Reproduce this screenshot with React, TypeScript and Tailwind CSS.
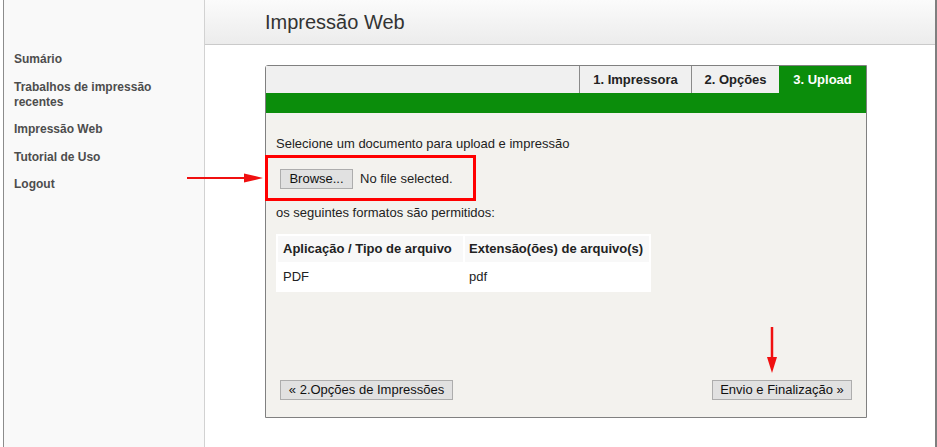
import React from "react";

export default function App() {
  return (
    <div className="relative flex h-[447px] w-[937px] overflow-hidden bg-white font-['Liberation_Sans',Arial,sans-serif] text-[#222]">
      {/* left edge */}
      <div className="w-[3px] shrink-0 bg-white" />
      <div className="w-px shrink-0 bg-[#8c8c8c]" />
      {/* sidebar */}
      <aside className="flex w-[201px] shrink-0 flex-col gap-[12.5px] border-r border-[#d2d2d2] bg-[#f9f9f9] pl-[10px] pr-[14px] pt-[52px] text-[12px] font-bold leading-[15px] text-[#4d4d4d]">
        <div>Sumário</div>
        <div>
          Trabalhos de impressão
          <br />
          recentes
        </div>
        <div>Impressão Web</div>
        <div>Tutorial de Uso</div>
        <div>Logout</div>
      </aside>
      {/* main */}
      <main className="flex min-w-0 flex-1 flex-col border-r-2 border-[#7f7f7f]">
        <header className="flex h-[45px] shrink-0 items-center border-b border-[#cacaca] bg-gradient-to-b from-[#fbfbfb] to-[#ececec] pl-[60px] text-[20px] text-[#333]">
          Impressão Web
        </header>
        <div className="pl-[60px] pt-[20px]">
          <div className="w-[602px] rounded-tl-[3px] border border-[#808080]">
            {/* tabs */}
            <div className="flex h-[27px] justify-end bg-[#f0f0f0] text-[13px] font-bold">
              <div className="flex w-[112px] items-center justify-center border-l border-[#8a8a8a]">1. Impressora</div>
              <div className="flex w-[88px] items-center justify-center border-l border-[#8a8a8a]">2. Opções</div>
              <div className="flex w-[87px] items-center justify-center bg-[#0b8d0b] text-white">3. Upload</div>
            </div>
            <div className="h-[20px] bg-[#0b8d0b]" />
            {/* body */}
            <div className="relative flex h-[304px] flex-col bg-[#f3f2ee] px-[10px] pb-[17px] pt-[23px] text-[13px] leading-[16px]">
              <div>Selecione um documento para upload e impressão</div>
              <div className="mt-[17px] flex items-center gap-[7px] pl-[4px]">
                <button className="h-[20px] w-[73px] border border-[#adadad] bg-[#e1e1e1] text-[13px] leading-[18px] text-[#111]">
                  Browse...
                </button>
                <span>No file selected.</span>
              </div>
              <div className="mt-[16px]">os seguintes formatos são permitidos:</div>
              <table className="mt-[13px] w-[375px] border-separate border-spacing-[2px] bg-white text-left">
                <thead>
                  <tr>
                    <th className="h-[26px] w-[185px] whitespace-nowrap bg-[#f8f8f8] px-[5px] font-bold">Aplicação / Tipo de arquivo</th>
                    <th className="h-[26px] whitespace-nowrap bg-[#f8f8f8] px-[4px] font-bold">Extensão(ões) de arquivo(s)</th>
                  </tr>
                </thead>
                <tbody>
                  <tr>
                    <td className="h-[26px] px-[5px]">PDF</td>
                    <td className="h-[26px] px-[4px]">pdf</td>
                  </tr>
                </tbody>
              </table>
              <div className="mt-auto flex justify-between pl-[4px] pr-[4px]">
                <button className="h-[20px] w-[173px] border border-[#adadad] bg-[#e1e1e1] text-[13px] leading-[18px] text-[#111]">
                  « 2.Opções de Impressões
                </button>
                <button className="h-[20px] w-[140px] border border-[#adadad] bg-[#e1e1e1] text-[13px] leading-[18px] text-[#111]">
                  Envio e Finalização »
                </button>
              </div>
              {/* red highlight box */}
              <div className="pointer-events-none absolute left-[-1px] top-[42px] h-[46px] w-[211px] border-[3px] border-[#ff0000]" />
            </div>
          </div>
        </div>
      </main>
      {/* annotation arrows */}
      <svg className="absolute left-[186px] top-[171px]" width="78" height="14" viewBox="0 0 78 14">
        <line x1="1" y1="7" x2="62" y2="7" stroke="#f01010" strokeWidth="2" />
        <polygon points="58,2.5 77,7 58,11.5" fill="#f01010" />
      </svg>
      <svg className="absolute left-[765px] top-[326px]" width="14" height="48" viewBox="0 0 14 48">
        <line x1="7" y1="1" x2="7" y2="34" stroke="#f01010" strokeWidth="2.5" />
        <polygon points="2,31 12,31 7,47" fill="#f01010" />
      </svg>
    </div>
  );
}
